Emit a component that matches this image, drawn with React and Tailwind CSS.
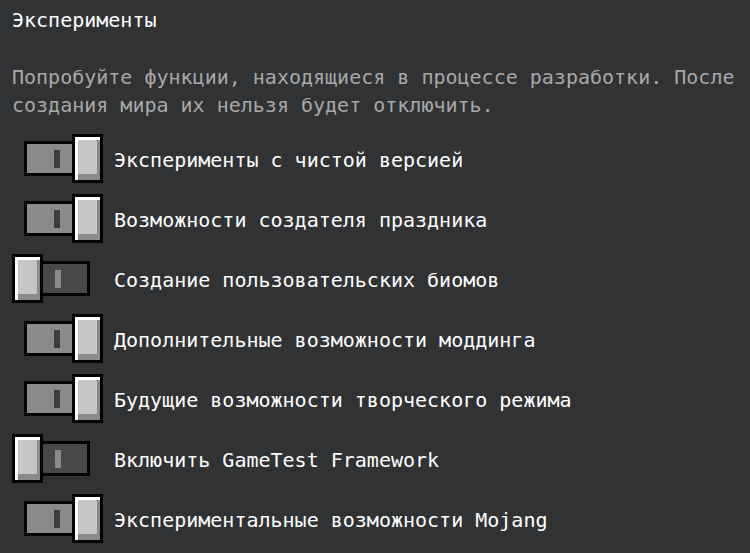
import React from 'react';

const experiments = [
  { label: 'Эксперименты с чистой версией', on: true },
  { label: 'Возможности создателя праздника', on: true },
  { label: 'Создание пользовательских биомов', on: false },
  { label: 'Дополнительные возможности моддинга', on: true },
  { label: 'Будущие возможности творческого режима', on: true },
  { label: 'Включить GameTest Framework', on: false },
  { label: 'Экспериментальные возможности Mojang', on: true },
];

const Knob = ({ className = '' }) => (
  <div
    className={`w-[31px] h-[49px] border-[3px] border-black bg-[#c6c6c6] shadow-[inset_3px_3px_0_#ffffff,inset_-3px_-6px_0_#8b8b8b] relative z-10 ${className}`}
  ></div>
);

const Toggle = ({ on }) => {
  if (on) {
    return (
      <div className="flex items-center ml-[12px] mb-[3px]">
        <div className="w-[51px] h-[35px] border-[3px] border-black bg-[#8b8b8b] flex items-center pl-[27px]">
          <div className="w-[6px] h-[18px] bg-[#3c3c3c]"></div>
        </div>
        <Knob className="-ml-[3px]" />
      </div>
    );
  }
  return (
    <div className="flex items-center mb-[3px]">
      <Knob className="w-[30px] h-[48px]" />
      <div className="w-[50px] h-[35px] -ml-[3px] border-[3px] border-black bg-[#484848] flex items-center pl-[12px]">
        <div className="w-[6px] h-[18px] bg-[#8b8b8b]"></div>
      </div>
    </div>
  );
};

const App = () => {
  return (
    <div
      className="w-[750px] h-[553px] bg-[#313233] px-3 overflow-hidden text-[20px]"
      style={{ fontFamily: '"DejaVu Sans Mono", "Liberation Mono", monospace' }}
    >
      {/* Header */}
      <div className="h-[40px] flex items-center text-white">Эксперименты</div>
      <p className="mt-[23px] leading-[28px] text-[#a8a8a8]">
        Попробуйте функции, находящиеся в процессе разработки. После
        <br />
        создания мира их нельзя будет отключить.
      </p>

      {/* Toggles */}
      <div className="mt-[11px]">
        {experiments.map((item) => (
          <div key={item.label} className="h-[60px] flex items-center">
            <div className="w-[102px] shrink-0">
              <Toggle on={item.on} />
            </div>
            <span className="text-white whitespace-nowrap">{item.label}</span>
          </div>
        ))}
      </div>
    </div>
  );
};

export default App;
